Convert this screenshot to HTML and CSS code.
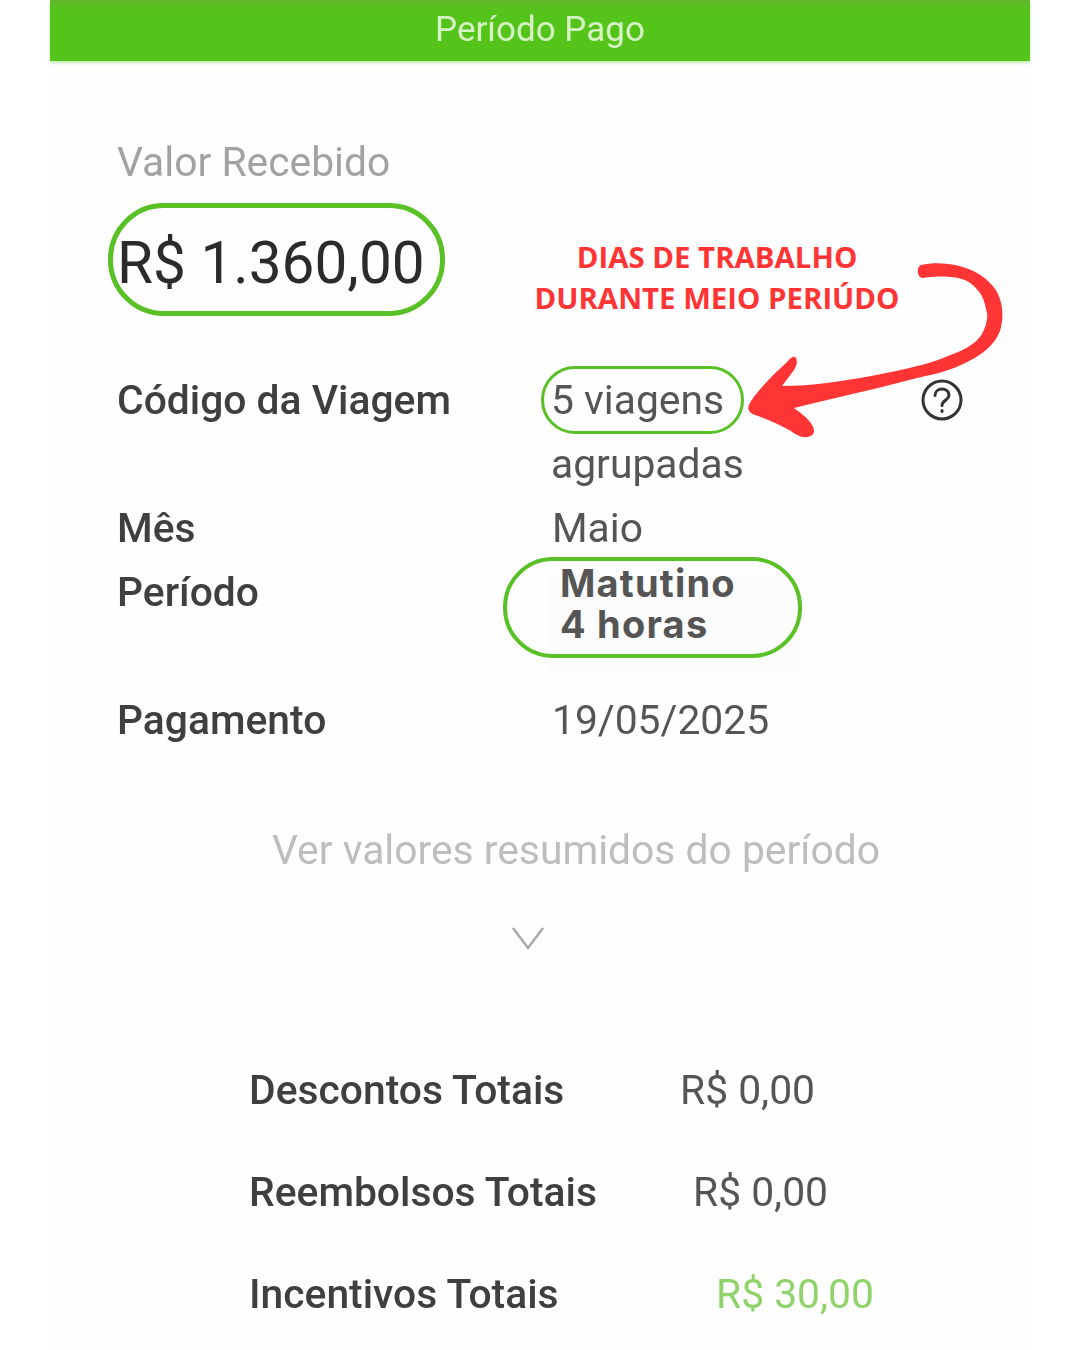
FILE: index.html
```html
<!DOCTYPE html>
<html lang="pt-BR">

<head>
    <meta charset="UTF-8">
    <meta name="viewport" content="width=device-width, initial-scale=1.0">
    <title>Período Pago</title>
    <link rel="stylesheet" href="styles.css">
</head>

<body>
    <main class="card">
        <header class="top-bar"><span class="soft">Período Pago</span></header>

        <section class="summary">
            <p class="received-label"><span class="soft">Valor Recebido</span></p>
            <p class="amount"><span class="soft">R$ 1.360,00</span></p>
        </section>

        <section class="details">
            <div class="label tall"><span class="soft">Código da Viagem</span></div>
            <div class="value tall">
                <span class="soft trips-text">5 viagens<br>agrupadas</span>
                <span class="pill pill-trips"></span>
            </div>
            <div class="help tall">
                <svg class="soft" width="44" height="44" viewBox="0 0 44 44" fill="none" stroke="#333" stroke-width="3" stroke-linecap="round">
                    <circle cx="22" cy="22" r="19"/>
                    <path d="M15 17.500c0-4 3.200-6.500 7-6.500s7 2.600 7 6c0 5-7 5.500-7 10.500"/>
                    <path d="M22 32.500v1"/>
                </svg>
            </div>

            <div class="label"><span class="soft">Mês</span></div>
            <div class="value"><span class="soft">Maio</span></div>
            <div></div>

            <div class="label tall"><span class="soft">Período</span></div>
            <div class="value tall">
                <span class="patch"></span>
                <span class="pill pill-shift"></span>
                <span class="shift-text">Matutino<br>4 horas</span>
            </div>
            <div class="tall"></div>

            <div class="label"><span class="soft">Pagamento</span></div>
            <div class="value"><span class="soft">19/05/2025</span></div>
            <div></div>
        </section>

        <section class="expand">
            <p class="expand-text"><span class="soft">Ver valores resumidos do período</span></p>
            <svg class="chevron" width="36" height="28" viewBox="0 0 36 28" fill="none" stroke="#a9a9a9" stroke-width="2.500">
                <path d="M3 3l15 20L33 3"/>
            </svg>
        </section>

        <section class="totals">
            <div class="total-row">
                <span class="total-label soft">Descontos Totais</span>
                <span class="total-value soft">R$ 0,00</span>
            </div>
            <div class="total-row">
                <span class="total-label soft">Reembolsos Totais</span>
                <span class="total-value refund soft">R$ 0,00</span>
            </div>
            <div class="total-row">
                <span class="total-label soft">Incentivos Totais</span>
                <span class="total-value bonus soft">R$ 30,00</span>
            </div>
        </section>
    </main>

    <!-- Annotation drawn over the screenshot -->
    <div class="note">DIAS DE TRABALHO<br>DURANTE MEIO PERIÚDO</div>
    <svg class="arrow" width="270" height="190" viewBox="740 255 270 190">
        <path fill="#ff3535" d="M921 265C930 263 940 263 948 264C968 266 988 276 997 292C1003 303 1004 318 1000 331C994 346 981 356 961 365C946 372 930 375 913 379C890 385 866 391 844 396C827 400 810 404 794 408C802 414 809 419 812 425C816 431 814 436 807 437C800 438 794 433 789 430C778 424 767 419 755 415C749 413 747 409 749 405C751 400 754 397 757 393C766 382 776 372 786 363C789 360 793 354 796 358C798 362 796 367 794 370C790 375 786 381 782 386C797 386 812 385 827 383C850 380 873 376 896 371C914 367 932 363 948 356C962 351 975 345 982 334C986 326 988 319 987 313C985 304 984 299 980 293C974 285 968 280 958 278C948 276 934 276 923 278C917 278 916 267 921 265Z"/>
    </svg>
</body>

</html>
```

FILE: styles.css
```css
* {
    box-sizing: border-box;
}

body {
    margin: 0;
    height: 1350px;
    overflow: hidden;
    position: relative;
    background-color: #fff;
    font-family: Roboto, "Liberation Sans", sans-serif;
}

p {
    margin: 0;
}

.soft {
    display: inline-block;
    filter: blur(0.6px);
}

.card {
    margin: 0 50px;
    height: 1350px;
    background-color: #fefefe;
}

.top-bar {
    height: 61px;
    display: flex;
    justify-content: center;
    align-items: center;
    padding-bottom: 3px;
    background: linear-gradient(#62b82e, #55c41a 12px);
    box-shadow: 0 2px 3px rgba(85, 196, 26, 0.35);
    color: #d6f2c4;
    font-size: 35px;
}

.summary {
    padding: 77px 0 0 67px;
}

.received-label {
    height: 48px;
    line-height: 48px;
    font-size: 40.800px;
    color: #a2a2a2;
}

.amount {
    width: 337px;
    height: 113px;
    margin: 17px 0 0 -9px;
    padding: 0 0 0 4px;
    border: 5px solid #59c026;
    border-radius: 56px;
    line-height: 111px;
    font-size: 58.500px;
    white-space: nowrap;
    color: #2b2b2b;
}

.details {
    display: grid;
    grid-template-columns: 435px 369px 1fr;
    grid-auto-rows: 64px;
    margin-top: 52px;
    padding-left: 67px;
    font-size: 40.800px;
    line-height: 64px;
}

.tall {
    grid-row: span 2;
}

.label {
    font-weight: 500;
    color: #3f3f3f;
    white-space: nowrap;
}

.value {
    position: relative;
    color: #555;
}

.trips-text {
    margin-left: -1px;
}

.help {
    height: 64px;
    margin-left: -1px;
    display: flex;
    align-items: center;
}

.pill {
    position: absolute;
    border-style: solid;
    border-color: #59c026;
}

.pill-trips {
    left: -11px;
    top: -2px;
    width: 203px;
    height: 68px;
    border-width: 3.500px;
    border-radius: 34px;
}

.pill-shift {
    left: -49px;
    top: -3px;
    width: 299px;
    height: 101px;
    border-width: 4.500px;
    border-radius: 50px;
}

.patch {
    position: absolute;
    left: -4px;
    top: 12px;
    width: 254px;
    height: 103px;
    background-color: #fcfcfd;
}

.shift-text {
    position: absolute;
    left: 8px;
    top: 3px;
    font-family: Inter, "Open Sans", sans-serif;
    font-size: 38px;
    font-weight: 700;
    letter-spacing: 1.200px;
    line-height: 41px;
    white-space: nowrap;
    color: #555;
}

.expand {
    margin-top: 74px;
}

.expand-text {
    padding-left: 222px;
    line-height: 48px;
    font-size: 40.800px;
    color: #bdbdbd;
}

.chevron {
    display: block;
    margin: 51px 0 0 460px;
    filter: blur(0.6px);
}

.totals {
    margin-top: 86px;
    padding-left: 199px;
}

.total-row {
    display: flex;
    align-items: center;
    height: 102px;
    font-size: 40.800px;
}

.total-label {
    width: 431px;
    flex-shrink: 0;
    font-weight: 500;
    color: #3f3f3f;
}

.total-value {
    color: #555;
}

.refund {
    margin-left: 13px;
}

.bonus {
    margin-left: 36px;
    color: #8fd36a;
}

.note {
    position: absolute;
    left: 517px;
    top: 237px;
    width: 400px;
    text-align: center;
    font-family: "Open Sans", sans-serif;
    font-size: 29.400px;
    font-weight: 700;
    line-height: 41px;
    color: #ff3535;
}

.arrow {
    position: absolute;
    left: 740px;
    top: 255px;
}
```
